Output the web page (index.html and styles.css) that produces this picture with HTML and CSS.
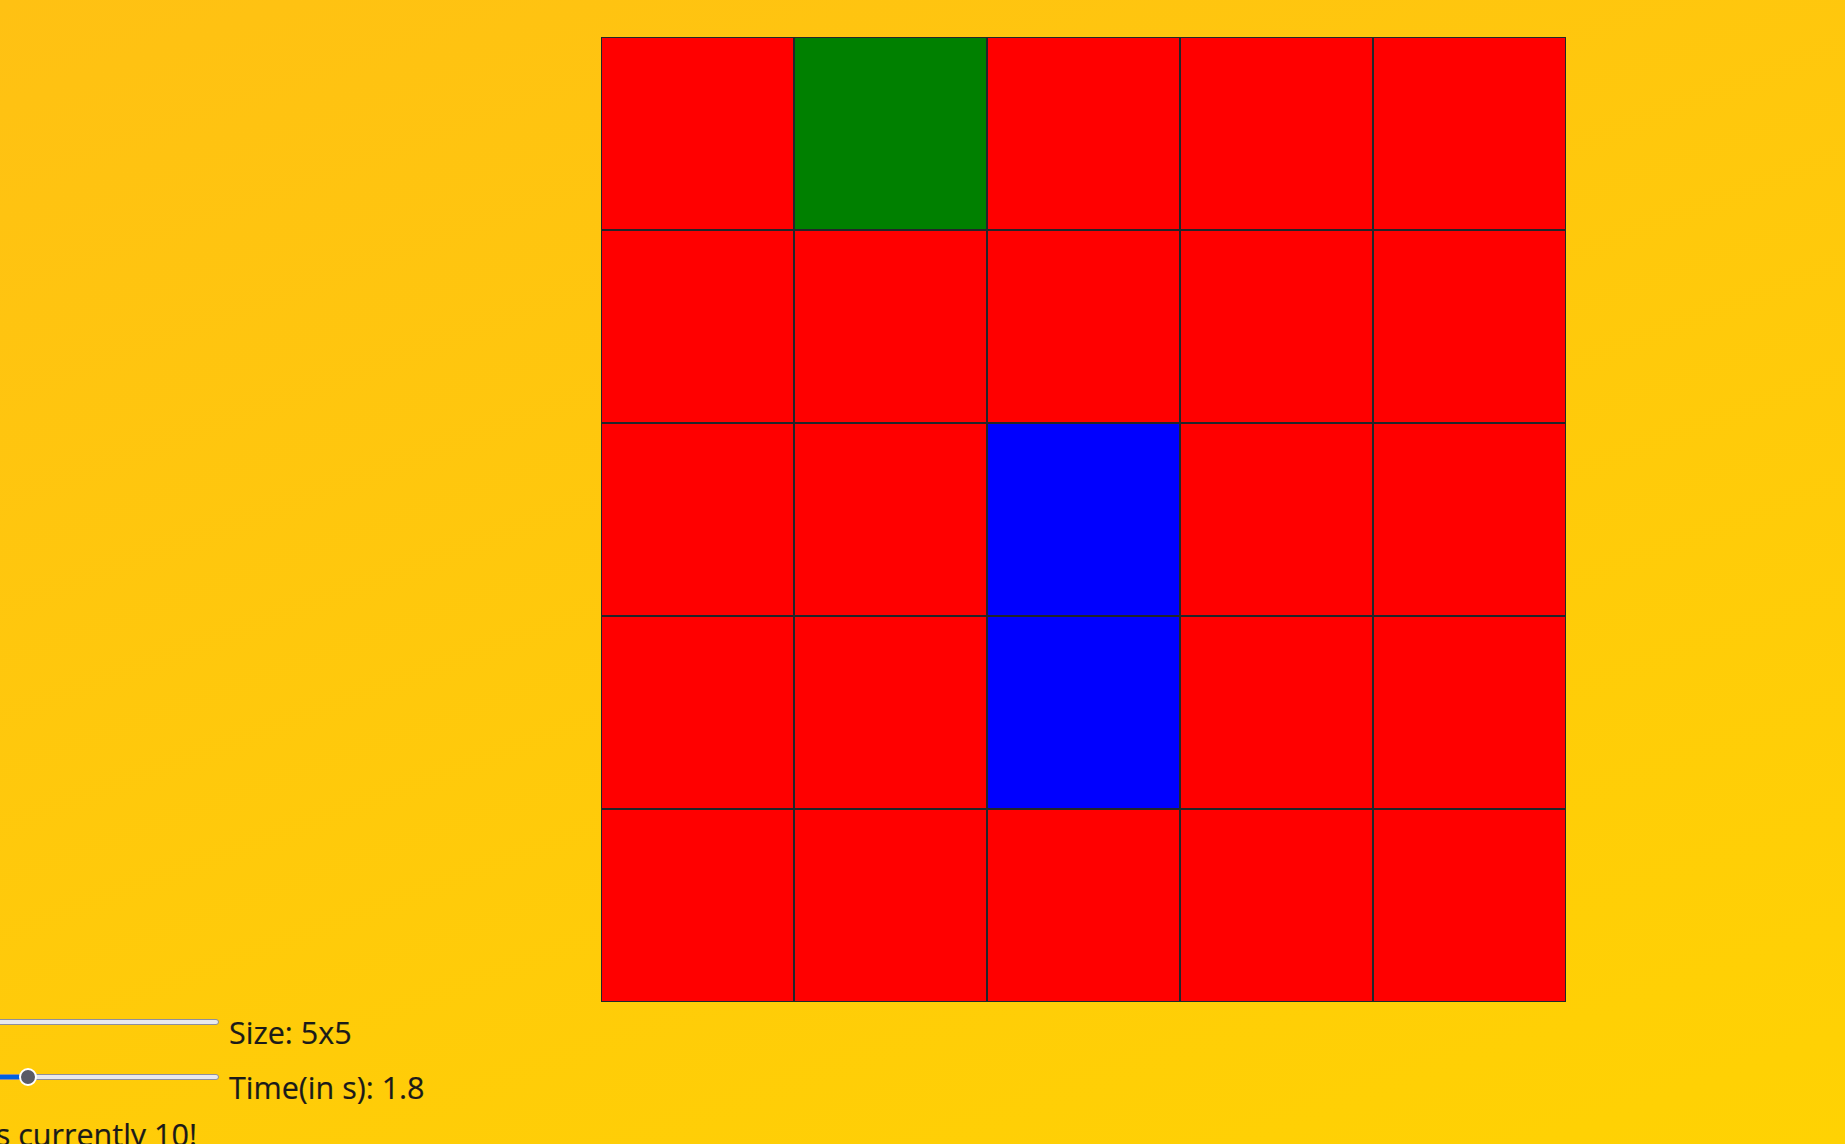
FILE: index.html
```html
<!DOCTYPE html>
<html lang="en">
<head>
<meta charset="utf-8">
<title>Grid Game</title>
<link rel="stylesheet" href="styles.css">
</head>
<body>
<main class="page">
  <div class="board">
    <div class="cell red"></div>
    <div class="cell green"></div>
    <div class="cell red"></div>
    <div class="cell red"></div>
    <div class="cell red"></div>
    <div class="cell red"></div>
    <div class="cell red"></div>
    <div class="cell red"></div>
    <div class="cell red"></div>
    <div class="cell red"></div>
    <div class="cell red"></div>
    <div class="cell red"></div>
    <div class="cell blue"></div>
    <div class="cell red"></div>
    <div class="cell red"></div>
    <div class="cell red"></div>
    <div class="cell red"></div>
    <div class="cell blue"></div>
    <div class="cell red"></div>
    <div class="cell red"></div>
    <div class="cell red"></div>
    <div class="cell red"></div>
    <div class="cell red"></div>
    <div class="cell red"></div>
    <div class="cell red"></div>
  </div>
  <div class="controls">
    <div class="control-row first">
      <input class="slider" type="range" min="5" max="20" step="1" value="5" style="--p:0%">
      <span class="label">Size: 5x5</span>
    </div>
    <div class="control-row second">
      <input class="slider" type="range" min="0.1" max="5" step="0.1" value="1.8" style="--p:34.7%">
      <span class="label">Time(in s): 1.8</span>
    </div>
    <div class="score-line">
      <span class="score">Your score is currently 10!</span>
    </div>
  </div>
</main>
</body>
</html>
```
FILE: styles.css
```css
html, body {
  margin: 0;
  padding: 0;
}

body {
  min-height: 100vh;
  background: linear-gradient(160deg, #ffc113 0%, #ffd203 100%);
  background-attachment: fixed;
  font-family: "Open Sans", "Noto Sans", "DejaVu Sans", sans-serif;
  color: #1a1a1a;
  overflow: hidden;
}

.page {
  padding-top: 37px;
}

.board {
  display: grid;
  grid-template-columns: repeat(5, 193px);
  grid-auto-rows: 193px;
  width: max-content;
  margin-left: 601px;
}

.cell {
  box-sizing: border-box;
  border: 1px solid #22262a;
}

.red { background: #ff0000; }
.green { background: #008000; }
.blue { background: #0000ff; }

.controls {
  margin-top: 9px;
  margin-left: -78px;
}

.control-row {
  display: flex;
  align-items: flex-start;
  height: 42px;
}

.control-row.first {
  margin-bottom: 13px;
}

.control-row.second {
  margin-bottom: 5px;
}

.label {
  font-size: 30.5px;
  line-height: 42px;
  margin-left: 10px;
  white-space: nowrap;
  -webkit-text-stroke: 0.2px #1a1a1a;
}

.slider {
  -webkit-appearance: none;
  appearance: none;
  width: 297px;
  height: 18px;
  margin: 2px 0 0 0;
  padding: 0;
  background: transparent;
  flex: none;
}

.slider::-webkit-slider-runnable-track {
  box-sizing: border-box;
  height: 6px;
  border: 1px solid #8f8f9d;
  border-radius: 3px;
  background: linear-gradient(to right, #0060df var(--p), #e9e9ed var(--p));
}

.slider::-webkit-slider-thumb {
  -webkit-appearance: none;
  appearance: none;
  box-sizing: border-box;
  width: 18px;
  height: 18px;
  margin-top: -7px;
  border-radius: 50%;
  border: 2px solid #ffffff;
  background: #5b5b66;
}

.score-line {
  display: flex;
  justify-content: flex-end;
  width: 275px;
  height: 42px;
}

.score {
  font-size: 30.5px;
  line-height: 42px;
  white-space: nowrap;
  flex: none;
  -webkit-text-stroke: 0.2px #1a1a1a;
}
```
